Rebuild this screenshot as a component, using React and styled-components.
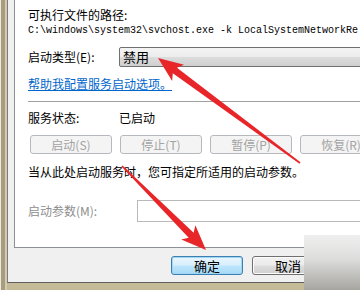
import React from "react";
import styled, { createGlobalStyle } from "styled-components";

const GlobalStyle = createGlobalStyle`
  html, body { margin: 0; padding: 0; background: #fff; }
  body { font-family: "SimSun", "Noto Sans CJK SC", sans-serif; }
`;

const Frame = styled.div`
  position: relative;
  width: 360px;
  height: 290px;
  overflow: hidden;
  box-sizing: border-box;
  padding: 0 0 7px 7px;
  background:
    linear-gradient(to right, #ece9df 0 1px, #a89e7f 1px 5px, #d3cbb1 5px 7px) no-repeat left top / 7px 100%,
    linear-gradient(to bottom, #d8d0b6, #c4ba98);
`;

const Dialog = styled.div`
  display: flex;
  flex-direction: column;
  height: 100%;
  box-sizing: border-box;
  width: 420px;
  background: #f0f0f0;
  border-left: 1px solid #7c7c7c;
  border-bottom: 1px solid #5f5f5f;
  padding-left: 6px;
`;

const Panel = styled.div`
  height: 248px;
  box-sizing: border-box;
  background: #fff;
  border-left: 1px solid #8c8f96;
  border-bottom: 1px solid #8c8f96;
  padding-left: 13px;
  display: flex;
  flex-direction: column;
  font-size: 12px;
  color: #000;
`;

const Text = styled.div`
  line-height: 16px;
  height: 16px;
  margin-top: ${(p) => p.$mt || 0}px;
  white-space: nowrap;
  color: ${(p) => (p.$muted ? "#8e8e8e" : "#000")};
`;

const PathText = styled.div`
  margin-top: 1px;
  height: 14px;
  line-height: 14px;
  font-family: "Liberation Mono", "Noto Sans CJK SC", monospace;
  font-size: 10px;
  white-space: nowrap;
`;

const FieldRow = styled.div`
  display: flex;
  align-items: center;
  margin-top: ${(p) => p.$mt}px;
  height: ${(p) => p.$h}px;
`;

const FieldLabel = styled.span`
  flex: 0 0 ${(p) => p.$w}px;
  line-height: 16px;
  white-space: nowrap;
  color: ${(p) => (p.$muted ? "#8e8e8e" : "#000")};
`;

const ComboBox = styled.div`
  flex: 1;
  height: 20px;
  box-sizing: border-box;
  border: 1px solid #707070;
  border-radius: 2px;
  background: linear-gradient(to bottom, #f4f4f4 0%, #ececec 48%, #dcdcdc 52%, #cfcfcf 100%);
  padding-left: 3px;
  line-height: 18px;
  font-size: 13px;
`;

const HelpLink = styled.a`
  margin-top: 9px;
  line-height: 16px;
  height: 16px;
  color: #0066cc;
  text-decoration: underline;
  white-space: nowrap;
  align-self: flex-start;
`;

const Separator = styled.div`
  margin-top: 9px;
  height: 0;
  border-top: 1px solid #a0a0a0;
`;

const ButtonRow = styled.div`
  display: flex;
  gap: 8px;
  margin-top: 9px;
  padding-left: 2px;
`;

const SysButton = styled.div`
  flex: 0 0 82px;
  height: 19px;
  box-sizing: border-box;
  border: 1px solid #b5b9bd;
  border-radius: 3px;
  background: #f4f4f4;
  color: #a3a3a3;
  text-align: center;
  line-height: 17px;
  font-size: 12px;
`;

const ParamInput = styled.div`
  flex: 1;
  height: 22px;
  box-sizing: border-box;
  border: 1px solid #b9b9b9;
  background: #fff;
`;

const Footer = styled.div`
  display: flex;
  gap: 9px;
  padding: 8px 0 0 157px;
  font-size: 13px;
`;

const DialogButton = styled.div`
  flex: 0 0 72px;
  height: 19px;
  box-sizing: border-box;
  border: 1px solid ${(p) => (p.$primary ? "#3c7fb1" : "#707070")};
  border-radius: 3px;
  background: ${(p) =>
    p.$primary
      ? "linear-gradient(to bottom, #e9f5fd 0%, #d9effc 48%, #bee6fd 52%, #a7d9f5 100%)"
      : "linear-gradient(to bottom, #f2f2f2 0%, #ebebeb 48%, #dddddd 52%, #cfcfcf 100%)"};
  box-shadow: ${(p) => (p.$primary ? "inset 0 0 0 1px #9fd6f6" : "inset 0 0 0 1px #fcfcfc")};
  text-align: center;
  line-height: 17px;
  color: #000;
`;

const Watermark = styled.div`
  position: absolute;
  left: 304px;
  top: 235px;
  right: 0;
  bottom: 0;
  background: linear-gradient(to bottom, #efefef 0%, #dcdcdb 45%, #a6a5a0 100%);
`;

const ArrowLayer = styled.svg`
  position: absolute;
  left: 0;
  top: 0;
  pointer-events: none;
`;

function Arrow({ tip, tail }) {
  const dx = tail[0] - tip[0];
  const dy = tail[1] - tip[1];
  const len = Math.sqrt(dx * dx + dy * dy);
  const ang = (Math.atan2(dy, dx) * 180) / Math.PI;
  const pts = `0,0 25,-10 21,-3.5 ${len},-0.8 ${len},0.8 21,3.5 25,10`;
  return (
    <polygon
      points={pts}
      fill="#e8262a"
      transform={`translate(${tip[0]} ${tip[1]}) rotate(${ang})`}
    />
  );
}

export default function App() {
  return (
    <>
      <GlobalStyle />
      <Frame>
        <Dialog>
          <Panel>
            <Text $mt={7}>可执行文件的路径:</Text>
            <PathText>C:\windows\system32\svchost.exe -k LocalSystemNetworkRe</PathText>
            <FieldRow $mt={9} $h={20}>
              <FieldLabel $w={91}>启动类型(E):</FieldLabel>
              <ComboBox>禁用</ComboBox>
            </FieldRow>
            <HelpLink href="#">帮助我配置服务启动选项。</HelpLink>
            <Separator />
            <FieldRow $mt={8} $h={16}>
              <FieldLabel $w={91}>服务状态:</FieldLabel>
              <FieldLabel $w={60}>已启动</FieldLabel>
            </FieldRow>
            <ButtonRow>
              <SysButton>启动(S)</SysButton>
              <SysButton>停止(T)</SysButton>
              <SysButton>暂停(P)</SysButton>
              <SysButton>恢复(R)</SysButton>
            </ButtonRow>
            <Text $mt={10}>当从此处启动服务时，您可指定所适用的启动参数。</Text>
            <FieldRow $mt={20} $h={22}>
              <FieldLabel $w={109} $muted>启动参数(M):</FieldLabel>
              <ParamInput />
            </FieldRow>
          </Panel>
          <Footer>
            <DialogButton $primary>确定</DialogButton>
            <DialogButton>取消</DialogButton>
          </Footer>
        </Dialog>
        <Watermark />
        <ArrowLayer width="360" height="290" viewBox="0 0 360 290">
          <Arrow tip={[158, 58]} tail={[300, 163]} />
          <Arrow tip={[206, 250]} tail={[122, 166]} />
        </ArrowLayer>
      </Frame>
    </>
  );
}
